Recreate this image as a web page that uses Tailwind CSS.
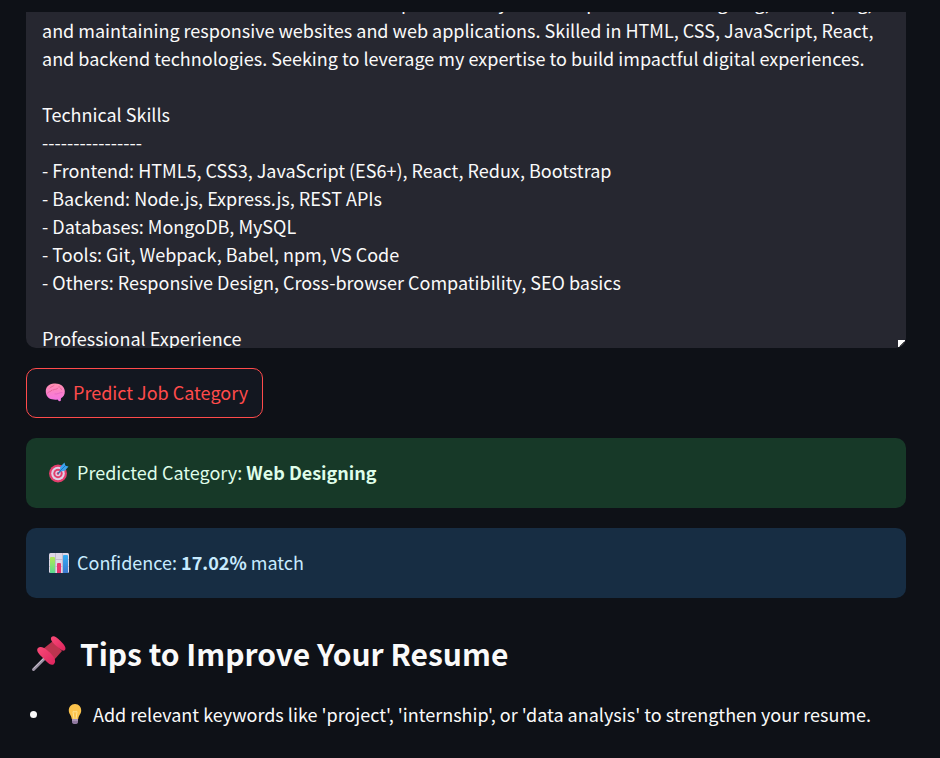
<!DOCTYPE html>
<html lang="en">
<head>
<meta charset="utf-8">
<meta name="viewport" content="width=device-width, initial-scale=1">
<title>Resume Job Category Predictor</title>
<script src="https://cdn.jsdelivr.net/npm/@tailwindcss/browser@4"></script>
</head>
<body class="min-h-screen bg-[#0e1117] font-['Source_Sans_Pro','Noto_Sans_CJK_SC',sans-serif] text-[18px] leading-7 text-[#fafafa]">
<main class="flex flex-col items-start gap-5 pt-3 pr-[34px] pl-[26px]">
  <div class="relative w-full">
    <textarea id="resume" aria-label="Resume text" spellcheck="false" class="block h-84 w-full resize-none overflow-hidden rounded-b-[10px] bg-[#262730] px-4 pt-0 outline-none">Passionate and detail-oriented Web Developer with 3+ years of experience in designing, developing,
and maintaining responsive websites and web applications. Skilled in HTML, CSS, JavaScript, React,
and backend technologies. Seeking to leverage my expertise to build impactful digital experiences.

Technical Skills
----------------
- Frontend: HTML5, CSS3, JavaScript (ES6+), React, Redux, Bootstrap
- Backend: Node.js, Express.js, REST APIs
- Databases: MongoDB, MySQL
- Tools: Git, Webpack, Babel, npm, VS Code
- Others: Responsive Design, Cross-browser Compatibility, SEO basics

Professional Experience
-----------------------
</textarea>
    <svg class="pointer-events-none absolute right-px bottom-px size-[7px]" viewBox="0 0 7 7" aria-hidden="true"><path d="M0 0h7v1L5 3 3 5 1 7H0z" fill="#fff"/><path d="M6 2v1L3 6H2V5h1V4h1V3h1V2z" fill="#555"/></svg>
  </div>

  <button type="button" class="flex h-[50px] items-center gap-2 rounded-[10px] border border-[#ff4b4b] bg-[#131720] pr-[14px] pb-0.5 pl-[18px] text-[#ff4b4b]">
    <svg class="size-5 shrink-0" viewBox="0 0 20 20" aria-hidden="true">
      <defs><linearGradient id="brain" x1="0" y1="0" x2="0" y2="1"><stop offset="0" stop-color="#ff8fae"/><stop offset="1" stop-color="#f573e5"/></linearGradient></defs>
      <path d="M.8 9.500C.5 5 4 1.800 9 1.500c6-.5 10.500 2.500 10.800 7.500.2 3.500-1.300 6-3.800 7.200l-.3 2.800-1.700.3-1.500-1.800c-2 .4-4 .2-5.500-.3C3.500 17 .8 13.500.8 9.500z" fill="url(#brain)"/>
      <path d="M2 11.500c2-3 4-1 5-3.500M5 6c1-1.500 3-1.500 4-2.500M8 8c2-1.500 4 0 5-2M14 4.500c1 1.500 2 1.500 2.500 3" fill="none" stroke="#e0608f" stroke-width=".8" stroke-linecap="round"/>
      <path d="M10 12c3 .5 4-1.500 7-1.500" fill="none" stroke="#dc5cc0" stroke-width=".6" stroke-linecap="round"/>
    </svg>
    <span>Predict Job Category</span>
  </button>

  <div role="status" class="flex h-[70px] w-full items-center gap-2 rounded-[10px] bg-[#173928] px-[22px] pb-0.5 text-[#dffde9]">
    <svg class="size-[21px] shrink-0" viewBox="0 0 21 21" aria-hidden="true">
      <circle cx="10" cy="11.500" r="9" fill="#e43d6d"/><circle cx="10" cy="11.500" r="6.800" fill="#dfcfe6"/><circle cx="10" cy="11.500" r="4.700" fill="#e43d6d"/><circle cx="10" cy="11.500" r="2.700" fill="#dfcfe6"/><circle cx="10" cy="11.500" r="1.200" fill="#d33268"/>
      <path d="M10 11.500l5-5" stroke="#356fae" stroke-width="1.300"/>
      <path d="M11.500 9.500l1-5L16.500.500l.8 3.200 3.200.8-3.700 4.300z" fill="#3ba5ef"/><path d="M12 9l5.500-5.500" stroke="#2071c4" stroke-width="1"/>
    </svg>
    <p>Predicted Category: <strong class="font-bold">Web Designing</strong></p>
  </div>

  <div role="status" class="flex h-[70px] w-full items-center gap-2 rounded-[10px] bg-[#172d43] px-[22px] pb-0.5 text-[#c7ebff]">
    <svg class="size-[21px] shrink-0" viewBox="0 0 21 21" aria-hidden="true">
      <defs><linearGradient id="g1" x1="0" y1="0" x2="0" y2="1"><stop offset="0" stop-color="#b5e854"/><stop offset="1" stop-color="#58d991"/></linearGradient><linearGradient id="g2" x1="0" y1="0" x2="0" y2="1"><stop offset="0" stop-color="#35adf5"/><stop offset="1" stop-color="#3c78cf"/></linearGradient></defs>
      <rect x="1" y="1" width="20" height="20" rx="1.500" fill="#ded7e6"/>
      <path d="M1 7.500h20M1 14.500h20M7.500 1v20M14.500 1v20" stroke="#bdb3c9" stroke-width=".8"/>
      <path d="M2 6a1 1 0 0 1 1-1h3a1 1 0 0 1 1 1v15H2z" fill="url(#g1)"/><path d="M9 12a1 1 0 0 1 1-1h2a1 1 0 0 1 1 1v9H9z" fill="#e8346f"/><path d="M15 4a1 1 0 0 1 1-1h3a1 1 0 0 1 1 1v17h-5z" fill="url(#g2)"/>
    </svg>
    <p>Confidence: <strong class="font-bold">17.02%</strong> match</p>
  </div>

  <h2 class="mt-3 flex h-12 items-center gap-3 pb-0.5 pl-[5px] text-[30px] leading-10 font-bold">
    <svg class="size-[37px] shrink-0" viewBox="0 0 37 37" aria-hidden="true">
      <defs><linearGradient id="pin" x1="0" y1="0" x2="1" y2="1"><stop offset="0" stop-color="#f94b78"/><stop offset="1" stop-color="#dc245d"/></linearGradient></defs>
      <path d="M14 23L2.500 34.500" stroke="#9c93a5" stroke-width="3" stroke-linecap="round"/><path d="M13 23L2.500 33.500" stroke="#c4bdca" stroke-width="1"/>
      <path d="M12 14l10-8 9 10-8 9z" fill="#bd344f"/>
      <path d="M7 13c2-2 6-1 10 3 6 5 9 10 6 13-2 2-5 0-7-2l-6-6c-3-3-5-6-3-8z" fill="url(#pin)"/>
      <path d="M20.500 2c2-2 5 0 9 4 4 4 6 7 4.500 9-2 2-5-1-8-3.500-4-3.500-7.500-7-5.500-9.500z" fill="url(#pin)"/>
    </svg>
    <span>Tips to Improve Your Resume</span>
  </h2>

  <ul class="w-full pt-0.5">
    <li class="flex items-center">
      <span class="ml-1 size-[7px] shrink-0 rounded-full bg-[#fafafa]" aria-hidden="true"></span>
      <svg class="mr-2 ml-7 size-5 shrink-0" viewBox="0 0 20 20" aria-hidden="true">
        <path d="M7 14h6v4q0 2-3 2t-3-2z" fill="#8f789f"/><path d="M7 16h6" stroke="#c3b1cc" stroke-width="1"/>
        <path d="M10 0C6 0 3.800 3 3.800 6.500c0 3.500 2.500 4.500 3 8.500h6.400c.5-4 3-5 3-8.500C16.200 3 14 0 10 0z" fill="#fbc34c"/>
        <path d="M9 15L8 8q0-1 1-.6l1 .8 1-.8q1-.4 1 .6l-1 7" fill="none" stroke="#ffe494" stroke-width="1"/>
      </svg>
      <span>Add relevant keywords like 'project', 'internship', or 'data analysis' to strengthen your resume.</span>
    </li>
  </ul>
</main>
<script>
  // Open the resume scrolled just past its first line.
  document.getElementById('resume').scrollTop = 24;
</script>
</body>
</html>
